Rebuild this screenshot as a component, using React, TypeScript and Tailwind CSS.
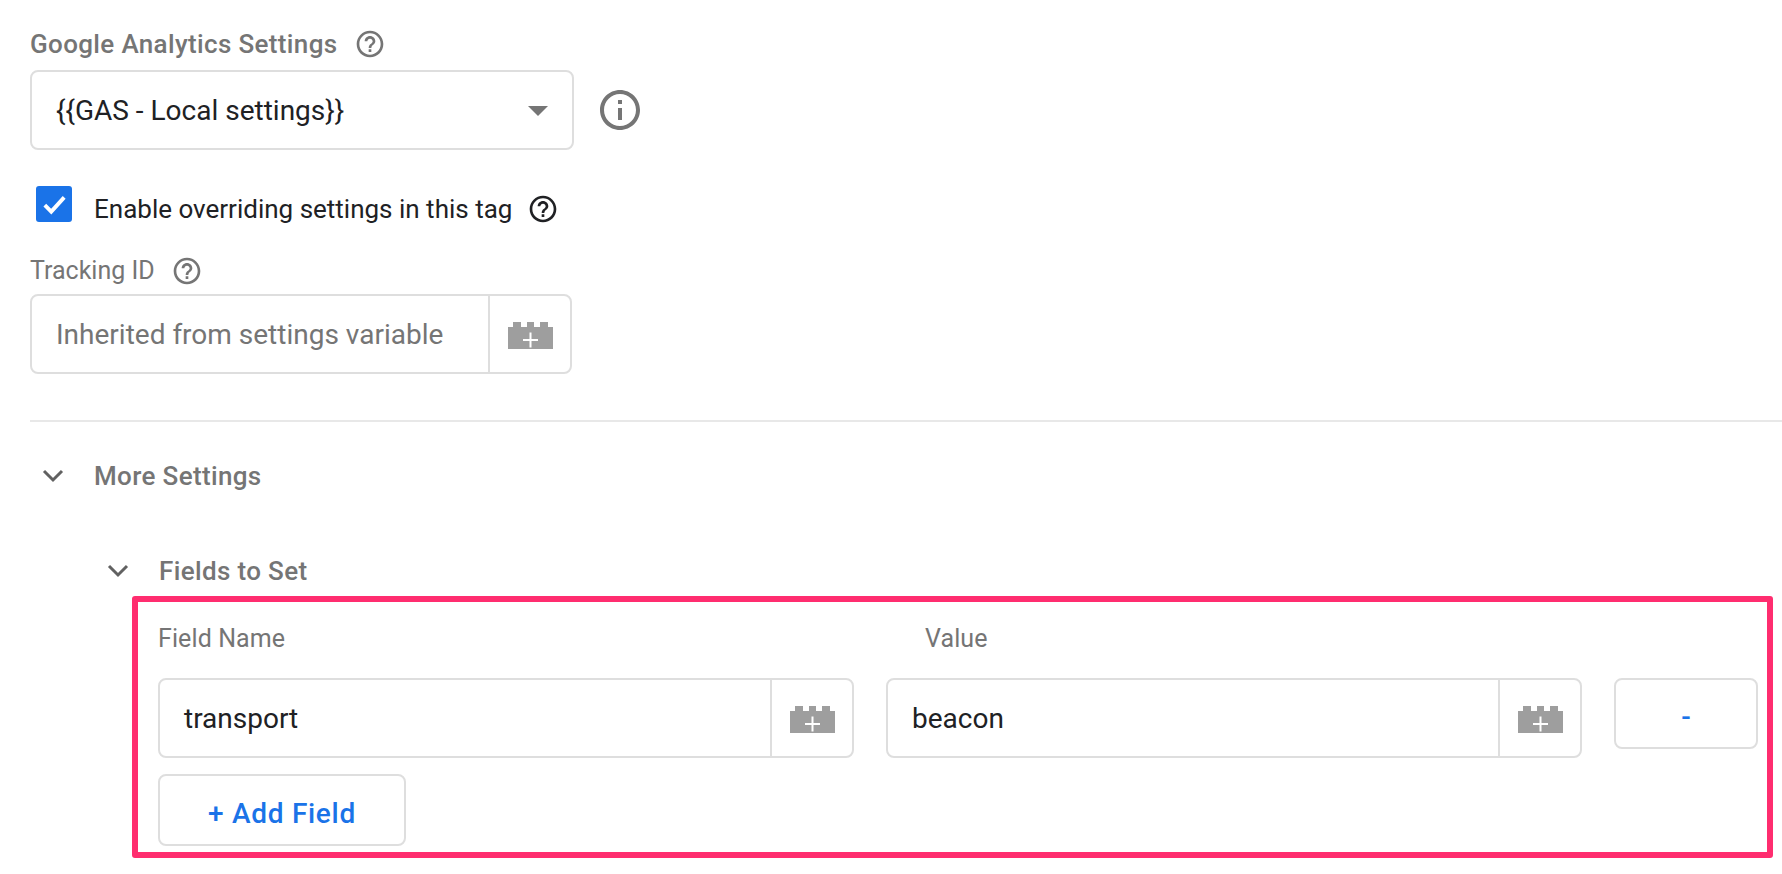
const font = "font-['Roboto',sans-serif]";

function HelpIcon({ size, color }: { size: number; color: string }) {
  return (
    <svg width={size} height={size} viewBox="0 0 24 24" fill={color}>
      <path d="M11 18h2v-2h-2v2zm1-16C6.48 2 2 6.48 2 12s4.48 10 10 10 10-4.48 10-10S17.52 2 12 2zm0 18c-4.41 0-8-3.59-8-8s3.59-8 8-8 8 3.59 8 8-3.59 8-8 8zm0-14c-2.21 0-4 1.79-4 4h2c0-1.1.9-2 2-2s2 .9 2 2c0 2-3 1.75-3 5h2c0-2.25 3-2.5 3-5 0-2.21-1.79-4-4-4z" />
    </svg>
  );
}

function InfoIcon() {
  return (
    <svg width="48" height="48" viewBox="0 0 24 24" fill="#757575">
      <path d="M11 7h2v2h-2V7zm0 4h2v6h-2v-6zm1-9C6.48 2 2 6.48 2 12s4.48 10 10 10 10-4.48 10-10S17.52 2 12 2zm0 18c-4.41 0-8-3.59-8-8s3.59-8 8-8 8 3.59 8 8-3.59 8-8 8z" />
    </svg>
  );
}

function Chevron() {
  return (
    <svg width="24" height="24" viewBox="0 0 24 24" fill="none" stroke="#616161" strokeWidth="3">
      <path d="M3 7l9 9 9-9" />
    </svg>
  );
}

// the little "insert variable" lego brick
function BrickIcon() {
  return (
    <svg className="mt-[3px]" width="45" height="27" viewBox="0 0 45 27">
      <path d="M0 5h5V0h8v5h6V0h7v5h6V0h8v5h5v22H0z" fill="#9e9e9e" />
      <path d="M22.5 10.5v15M15 18h15" stroke="#fff" strokeWidth="2" />
    </svg>
  );
}

function VariableInput({
  value,
  placeholder,
  width,
}: {
  value?: string;
  placeholder?: string;
  width: string;
}) {
  return (
    <div className={`flex h-[80px] rounded-[8px] border-2 border-[#dedede] bg-white ${width}`}>
      <div
        className={`flex-1 flex items-center pl-[24px] pt-[2px] text-[28px] ${
          value ? "text-[#202124]" : "text-[#757575]"
        }`}
      >
        {value ?? placeholder}
      </div>
      <div className="w-[82px] shrink-0 flex items-center justify-center border-l-2 border-[#dedede]">
        <BrickIcon />
      </div>
    </div>
  );
}

export default function App() {
  return (
    <div className={`${font} w-[1782px] h-[874px] overflow-hidden bg-white pl-[30px] pt-[29px]`}>
      <div className="flex items-center gap-[16px] h-[30px] text-[26px] font-medium tracking-[0.35px] text-[#757575]">
        Google Analytics Settings
        <HelpIcon size={32} color="#757575" />
      </div>

      <div className="mt-[11px] flex items-center gap-[22px]">
        <div className="w-[544px] h-[80px] flex items-center justify-between rounded-[8px] border-2 border-[#dedede] pl-[24px] pr-[24px] pt-[2px] text-[28px] text-[#202124]">
          {"{{GAS - Local settings}}"}
          <div className="w-0 h-0 border-x-[10px] border-x-transparent border-t-[10px] border-t-[#757575]" />
        </div>
        <InfoIcon />
      </div>

      <div className="mt-[36px] ml-[6px] h-[36px] flex items-center">
        <div className="w-[36px] h-[36px] rounded-[3px] bg-[#1a73e8] flex items-center justify-center">
          <svg width="31" height="31" viewBox="0 0 24 24" fill="none" stroke="#fff" strokeWidth="3">
            <path d="M4.5 12.5 9.5 17.5 19.5 6.5" />
          </svg>
        </div>
        <span className="ml-[22px] mt-[9px] leading-[26px] text-[26px] text-[#202124]">
          Enable overriding settings in this tag
        </span>
        <span className="ml-[15px] mt-[10px] flex">
          <HelpIcon size={32} color="#202124" />
        </span>
      </div>

      <div className="mt-[34px] flex items-center gap-[16px] h-[30px] text-[25px] text-[#757575]">
        Tracking ID
        <HelpIcon size={32} color="#757575" />
      </div>

      <div className="mt-[8px]">
        <VariableInput placeholder="Inherited from settings variable" width="w-[542px]" />
      </div>

      <div className="mt-[46px] h-[2px] bg-[#e8e8e8]" />

      <div className="mt-[39px] flex items-center h-[30px] text-[26px] font-medium tracking-[0.35px] text-[#757575]">
        <span className="ml-[11px] mr-[29px] flex">
          <Chevron />
        </span>
        More Settings
      </div>

      <div className="mt-[65px] flex items-center h-[30px] text-[26px] font-medium tracking-[0.35px] text-[#757575]">
        <span className="ml-[76px] mr-[29px] flex">
          <Chevron />
        </span>
        Fields to Set
      </div>

      <div className="mt-[10px] ml-[102px] w-[1641px] h-[262px] rounded-[3px] border-[6px] border-[#ff2d6f] pl-[20px] pt-[22px]">
        <div className="flex h-[30px] items-center text-[25px] tracking-[0.1px] text-[#757575]">
          <span className="w-[767px]">Field Name</span>
          <span>Value</span>
        </div>
        <div className="mt-[24px] flex items-start">
          <VariableInput value="transport" width="w-[696px]" />
          <div className="ml-[32px]">
            <VariableInput value="beacon" width="w-[696px]" />
          </div>
          <button className="ml-[32px] w-[144px] h-[71px] rounded-[8px] border-2 border-[#dedede] pt-[6px] text-[28px] font-medium text-[#1a73e8]">
            -
          </button>
        </div>
        <button className="mt-[16px] block w-[248px] h-[72px] rounded-[8px] border-2 border-[#dedede] pt-[8px] text-[28px] font-medium tracking-[0.7px] text-[#1a73e8]">
          + Add Field
        </button>
      </div>
    </div>
  );
}
